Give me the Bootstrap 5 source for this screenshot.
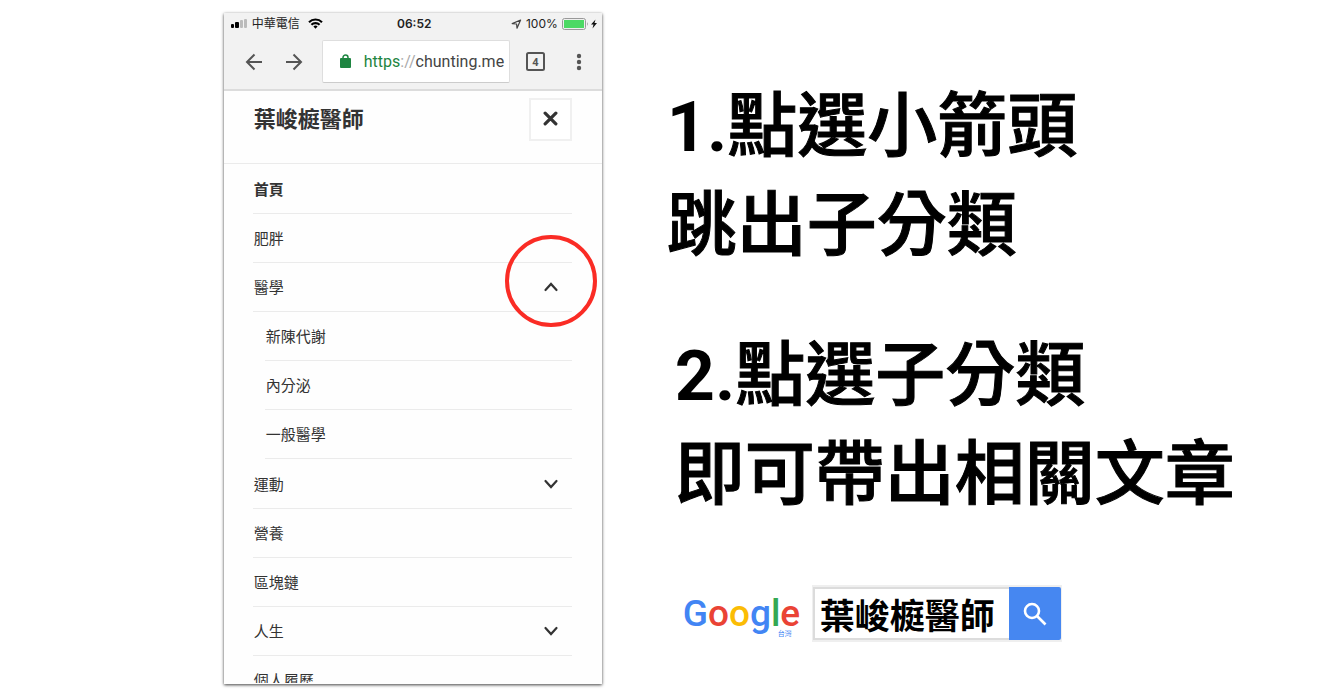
<!DOCTYPE html>
<html lang="zh-Hant">
<head>
<meta charset="utf-8">
<meta name="viewport" content="width=device-width, initial-scale=1">
<title>葉峻榳醫師 選單教學</title>
<link href="https://cdn.jsdelivr.net/npm/bootstrap@5.3.0/dist/css/bootstrap.min.css" rel="stylesheet">
<style>
body { font-family: "Liberation Sans", "Noto Sans CJK TC", sans-serif; color: #000; background: #fff; }
.stage { padding: 12px 0 0 17%; gap: 65px; margin-left: -1px; }
.phone { width: 378px; height: calc(100vh - 25px); padding-bottom: 1px; background: #fefefe; box-shadow: 0 1px 3px rgba(0,0,0,.75); color: #333; margin-top: 1px; }
.phone-screen { height: 100%; }
.chrome-bar { background: #f2f2f2; border-bottom: 2px solid #dcdcdc; height: 78px; }
.status { height: 21px; font: 12px/21px Inter, "Noto Sans CJK TC", sans-serif; color: #222; padding: 0 4px 0 7px; }
.status > div { flex: 1 1 0; }
.status .clock { font-weight: 600; font-size: 12px; }
.tools { height: 55px; padding: 0 14px 0 21px; }
.plain-btn { background: none; border: 0; padding: 0; line-height: 0; color: #555; }
.forward { margin-left: 22px; }
.url { width: 188px; height: 43px; background: #fff; border: 1px solid #dedede; border-bottom-color: #ccc; border-radius: 2px; font: 16px/40px Roboto, sans-serif; color: #444; padding-left: 17px; margin-left: 19px; }
.url .secure { color: #1e8541; }
.url .sep { color: #aaa; }
.site-head { height: 73px; border-bottom: 1px solid #ebebeb; padding: 7px 30px 0 30px; }
.site-title { font: 700 22px/38px "Noto Sans CJK TC", sans-serif; }
.close-btn { width: 43px; height: 43px; border: 2px solid #f0f0f0; background: #fff; color: #333; padding: 0 0 3px; }
.menu-list { margin: 0 30px 0 29px; }
.menu-list a { color: #333; font: 15px/48px "Noto Sans CJK TC", sans-serif; height: 49px; border-bottom: 1px solid #ebebeb; padding-left: 1px; }
.menu-list > li:first-child > a { font-weight: 700; height: 50px; line-height: 50px; }
.menu-list ul { padding: 0 0 1px 12px; }
.arrow { right: 13px; top: 18px; }
.ring { width: 92px; height: 92px; border: 4px solid #fa2c25; right: -25px; top: -28px; pointer-events: none; }
.guide { padding-top: 66px; }
.step { font: 500 70px/99px Roboto, "Noto Sans CJK TC", sans-serif; white-space: nowrap; -webkit-text-stroke: 1px #000; }
.step .num { font-weight: 700; -webkit-text-stroke: 0; }
.step-two { margin-top: 51px; padding-left: 8px; }
.search-line { margin: 60px 0 0 16px; gap: 11px; }
.wordmark { font: 500 37px/50px Roboto, sans-serif; width: 118px; }
.g-blue { color: #4285f4; } .g-red { color: #ea4335; } .g-gold { color: #fbbc05; } .g-green { color: #34a853; }
.region { font: 7px/8px "Noto Sans CJK TC", sans-serif; left: 95px; top: 40px; }
.search-box { border: 1px solid #efefef; background: #efefef; padding: 1px 0; }
.search-box input { width: 196px; height: 53px; border: 2px solid #dcdcdc; border-right: 0; padding: 0 0 0 5px; font: 700 35px/49px "Noto Sans CJK TC", sans-serif; color: #000; background: #fff; border-radius: 0; }
.search-box button { width: 52px; height: 53px; border: 0; border-radius: 0 2px 2px 0; background: #4687f1; }
</style>
</head>
<body>
<main class="stage d-flex align-items-start min-vh-100">
  <section class="phone flex-shrink-0">
   <div class="phone-screen overflow-hidden">
    <header class="chrome-bar">
      <div class="status d-flex align-items-center">
        <div class="d-flex align-items-center gap-1">
          <svg width="17" height="9" viewBox="0 0 17 9"><rect y="5" width="3" height="4" rx="1" fill="#000"/><rect x="4" y="3" width="4" height="6" rx="1" fill="#000"/><rect x="9" y="1" width="3" height="8" rx="1" fill="#bbb"/><rect x="13" width="3" height="9" rx="1" fill="#bbb"/></svg>
          <span class="text-nowrap">中華電信</span>
          <svg class="ms-1" width="15" height="11" viewBox="0 0 15 11" fill="none" stroke="#000" stroke-width="2.1"><path d="M1 4.2a9.2 9.2 0 0 1 13 0M3.4 6.8a5.8 5.8 0 0 1 8.2 0"/><path d="M5.4 8.5a3 3 0 0 1 4.2 0L7.5 10.8z" fill="#000" stroke="none"/></svg>
        </div>
        <span class="clock">06:52</span>
        <div class="d-flex align-items-center justify-content-end">
          <svg class="me-1" width="11" height="10" viewBox="0 0 11 10" fill="none" stroke="#444" stroke-width="1.2" stroke-linejoin="round"><path d="M1.200 4.600 9.600 1 6 9.200 5.600 5z"/></svg>
          <span>100%</span>
          <svg class="ms-1" width="36" height="12" viewBox="0 0 36 12"><rect x=".5" y=".5" width="23" height="11" rx="2" fill="#eee" stroke="#999"/><rect x="2" y="2" width="20" height="8" fill="#4cd964"/><path d="M25 4v4q1.500-2 0-4" fill="#888"/><path d="m33.500 1.500-4.500 5h2.500l-1 4 4.500-5.500h-2.500z" fill="#111"/></svg>
        </div>
      </div>
      <div class="tools d-flex align-items-center">
        <button class="plain-btn" aria-label="上一頁"><svg width="18" height="18" viewBox="0 0 18 18" fill="none" stroke="currentColor" stroke-width="2"><path d="M17 9H2M9.500 1.500 2 9l7.500 7.500"/></svg></button>
        <button class="plain-btn forward" aria-label="下一頁"><svg width="18" height="18" viewBox="0 0 18 18" fill="none" stroke="currentColor" stroke-width="2"><path d="M1 9h15M8.500 1.500 16 9l-7.500 7.500"/></svg></button>
        <div class="url d-flex align-items-center text-nowrap">
          <svg class="me-2" width="16" height="15" viewBox="0 0 16 15"><rect x="0" y="4" width="11" height="10" rx="1" fill="#1e8541"/><path d="M3 5V3.500a2.500 2.500 0 0 1 5 0V5" fill="none" stroke="#1e8541" stroke-width="1.500"/></svg>
          <span><span class="secure">https</span><span class="sep">://</span>chunting.me</span>
        </div>
        <button class="plain-btn ms-3" aria-label="分頁"><svg width="19" height="19" viewBox="0 0 19 19"><rect x="1" y="1" width="17" height="17" rx="1.500" fill="none" stroke="#555" stroke-width="2"/><text x="9.500" y="13.500" text-anchor="middle" font-family="Roboto" font-weight="700" font-size="11" fill="#555">4</text></svg></button>
        <button class="plain-btn ms-auto" aria-label="更多"><svg width="18" height="18" viewBox="0 0 18 18" fill="#555"><circle cx="9" cy="3" r="2.200"/><circle cx="9" cy="9" r="2.200"/><circle cx="9" cy="15" r="2.200"/></svg></button>
      </div>
    </header>
    <div class="site-head d-flex justify-content-between align-items-start">
      <h1 class="site-title m-0">葉峻榳醫師</h1>
      <button class="close-btn d-flex align-items-center justify-content-center" aria-label="關閉"><svg width="15" height="15" viewBox="0 0 14 14" stroke="currentColor" stroke-width="3" stroke-linecap="round"><path d="m2 2 10 10M12 2 2 12"/></svg></button>
    </div>
    <nav>
      <ul class="menu-list list-unstyled">
        <li><a class="d-block text-decoration-none" href="#">首頁</a></li>
        <li><a class="d-block text-decoration-none" href="#">肥胖</a></li>
        <li class="position-relative"><a class="d-block text-decoration-none" href="#">醫學</a>
          <button class="plain-btn arrow position-absolute" aria-label="收合"><svg width="16" height="12" viewBox="0 0 16 12" fill="none" stroke="#333" stroke-width="2.200" stroke-linecap="round"><path d="m2.500 9 5.500-6 5.500 6"/></svg></button>
          <span class="ring position-absolute rounded-circle"></span>
          <ul class="list-unstyled">
            <li><a class="d-block text-decoration-none" href="#">新陳代謝</a></li>
            <li><a class="d-block text-decoration-none" href="#">內分泌</a></li>
            <li><a class="d-block text-decoration-none" href="#">一般醫學</a></li>
          </ul>
        </li>
        <li class="position-relative"><a class="d-block text-decoration-none" href="#">運動</a>
          <button class="plain-btn arrow position-absolute" aria-label="展開"><svg width="16" height="12" viewBox="0 0 16 12" fill="none" stroke="#333" stroke-width="2.200" stroke-linecap="round"><path d="m2.500 3 5.500 6 5.500-6"/></svg></button></li>
        <li><a class="d-block text-decoration-none" href="#">營養</a></li>
        <li><a class="d-block text-decoration-none" href="#">區塊鏈</a></li>
        <li class="position-relative"><a class="d-block text-decoration-none" href="#">人生</a>
          <button class="plain-btn arrow position-absolute" aria-label="展開"><svg width="16" height="12" viewBox="0 0 16 12" fill="none" stroke="#333" stroke-width="2.200" stroke-linecap="round"><path d="m2.500 3 5.500 6 5.500-6"/></svg></button></li>
        <li><a class="d-block text-decoration-none" href="#">個人履歷</a></li>
      </ul>
    </nav>
   </div>
  </section>
  <section class="guide">
    <h2 class="step m-0"><span class="num">1.</span>點選小箭頭<br>跳出子分類</h2>
    <div class="step-two"><h2 class="step m-0"><span class="num">2.</span>點選子分類<br>即可帶出相關文章</h2></div>
    <form class="search-line d-flex align-items-center" onsubmit="return false">
      <div class="wordmark position-relative"><span class="g-blue">G</span><span class="g-red">o</span><span class="g-gold">o</span><span class="g-blue">g</span><span class="g-green">l</span><span class="g-red">e</span><span class="region g-blue position-absolute text-nowrap">台灣</span></div>
      <div class="search-box d-flex">
        <input type="text" value="葉峻榳醫師" aria-label="搜尋">
        <button class="d-flex align-items-center justify-content-center p-0" aria-label="搜尋"><svg width="24" height="24" viewBox="0 0 24 24" fill="none" stroke="#fff" stroke-width="2.600"><circle cx="9" cy="9" r="7"/><path d="m14 14 8.500 8.500"/></svg></button>
      </div>
    </form>
  </section>
</main>
<script src="https://cdn.jsdelivr.net/npm/bootstrap@5.3.0/dist/js/bootstrap.bundle.min.js"></script>
</body>
</html>
